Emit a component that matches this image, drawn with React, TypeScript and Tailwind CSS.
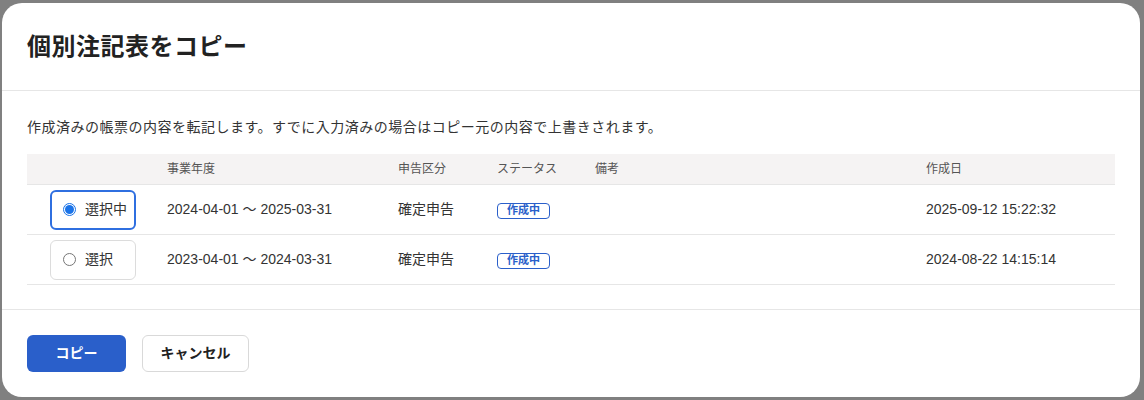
const rows = [
  {
    selected: true,
    period: "2024-04-01 ～ 2025-03-31",
    kind: "確定申告",
    status: "作成中",
    note: "",
    created: "2025-09-12 15:22:32",
  },
  {
    selected: false,
    period: "2023-04-01 ～ 2024-03-31",
    kind: "確定申告",
    status: "作成中",
    note: "",
    created: "2024-08-22 14:15:14",
  },
];

const cols = "grid grid-cols-[140px_231px_99px_98px_331px_1fr]";

const Radio = ({ checked }: { checked: boolean }) => (
  <span
    className={`flex h-[13px] w-[13px] items-center justify-center rounded-full border ${
      checked ? "border-[#1a73e8]" : "border-[#767676]"
    } bg-white`}
  >
    {checked && <span className="h-[9px] w-[9px] rounded-full bg-[#1a73e8]" />}
  </span>
);

const App = () => {
  return (
    <div
      className="h-[400px] w-[1144px] overflow-hidden bg-[#808080] pt-[3px] pl-[2px]"
      style={{ fontFamily: '"Liberation Sans", "Noto Sans CJK JP", sans-serif' }}
    >
      <div className="flex h-[394px] w-[1138px] flex-col rounded-[20px] bg-white text-[#333]">
        <div className="h-[88px] border-b border-[#e6e6e6] px-[25px] pt-[28px]">
          <h1 className="text-[24px] font-bold leading-[32px] tracking-[0.5px] text-[#222]">個別注記表をコピー</h1>
        </div>

        <div className="h-[219px] border-b border-[#e6e6e6] px-[25px] pt-[25px]">
          <p className="text-[14px] leading-[22px] tracking-[0.5px]">
            作成済みの帳票の内容を転記します。すでに入力済みの場合はコピー元の内容で上書きされます。
          </p>

          <div className="mt-[16px]">
            <div className={`${cols} h-[31px] items-center border-b border-[#e6e6e6] bg-[#f5f3f3] text-[12px] text-[#555]`}>
              <span />
              <span>事業年度</span>
              <span>申告区分</span>
              <span>ステータス</span>
              <span>備考</span>
              <span>作成日</span>
            </div>
            {rows.map((r, i) => (
              <div key={i} className={`${cols} h-[50px] items-center border-b border-[#e6e6e6] text-[14px]`}>
                <div className="pl-[23px]">
                  <div
                    className={`flex h-[40px] w-[86px] items-center gap-[9px] rounded-[6px] bg-white ${
                      r.selected ? "border-2 border-[#2f6fe0] pl-[11px]" : "border border-[#dcdcdc] pl-[12px]"
                    }`}
                  >
                    <Radio checked={r.selected} />
                    <span>{r.selected ? "選択中" : "選択"}</span>
                  </div>
                </div>
                <span>{r.period}</span>
                <span>{r.kind}</span>
                <span>
                  <span className="inline-flex h-[16px] w-[53px] items-center justify-center rounded-[4px] border border-[#2a5fca] text-[11px] font-bold leading-none text-[#2a5fca]">
                    {r.status}
                  </span>
                </span>
                <span>{r.note}</span>
                <span>{r.created}</span>
              </div>
            ))}
          </div>
        </div>

        <div className="flex gap-[16px] px-[25px] pt-[25px]">
          <button className="h-[37px] w-[99px] rounded-[6px] bg-[#2a5fca] text-[14px] font-bold text-white">
            コピー
          </button>
          <button className="h-[37px] w-[107px] rounded-[6px] border border-[#d9d9d9] bg-white text-[14px] font-bold text-[#222]">
            キャンセル
          </button>
        </div>
      </div>
    </div>
  );
};

export default App;
